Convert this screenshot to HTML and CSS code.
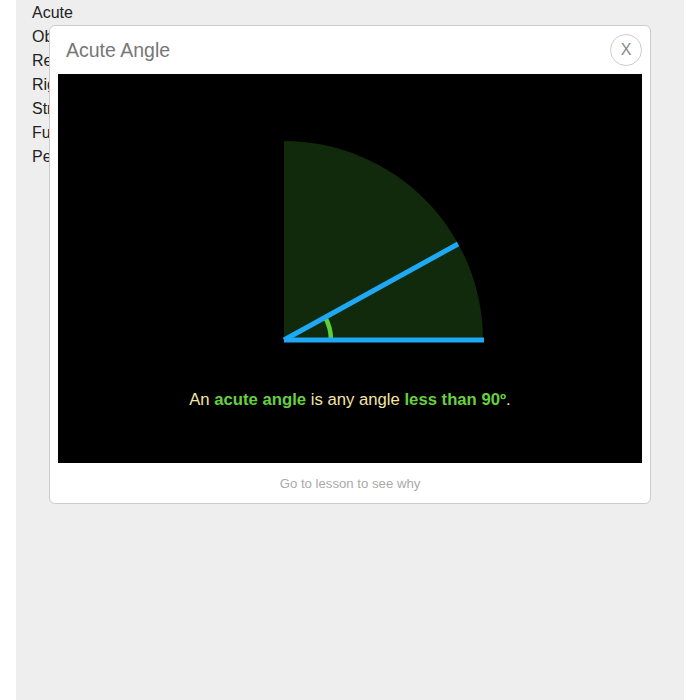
FILE: index.html
```html
<!DOCTYPE html>
<html>
<head>
<meta charset="utf-8">
<link rel="stylesheet" href="styles.css">
</head>
<body>
<div class="page">
  <ul class="list">
    <li>Acute</li>
    <li>Obtuse</li>
    <li>Reflex</li>
    <li>Right</li>
    <li>Straight</li>
    <li>Full</li>
    <li>Perpendicular</li>
  </ul>
  <div class="modal">
    <div class="modal-head">
      <h1 class="title">Acute Angle</h1>
      <button class="close">X</button>
    </div>
    <div class="stage">
      <svg class="diagram" width="584" height="389" viewBox="0 0 584 389">
        <path d="M226 266 L226 67 A199 199 0 0 1 425 266 Z" fill="#112a0c"/>
        <path d="M273 266 A47 47 0 0 0 266.7 242.5" fill="none" stroke="#5ccf3a" stroke-width="4.5"/>
        <line x1="226" y1="266" x2="400" y2="170" stroke="#1ea8f5" stroke-width="5"/>
        <line x1="226" y1="266" x2="426" y2="266" stroke="#1ea8f5" stroke-width="5"/>
      </svg>
      <p class="caption">An <b>acute angle</b> is any angle <b>less than 90º</b>.</p>
    </div>
    <div class="modal-foot">Go to lesson to see why</div>
  </div>
</div>
</body>
</html>
```
FILE: styles.css
```css
html, body {
  margin: 0;
  padding: 0;
  background: #fff;
  font-family: "Liberation Sans", Arial, sans-serif;
}
.page {
  position: relative;
  margin: 0 16px;
  background: #eeeeee;
  min-height: 700px;
}
.list {
  list-style: none;
  margin: 0;
  padding: 1px 0 0 16px;
  font-size: 16px;
  line-height: 24px;
  color: #222;
}
.modal {
  position: absolute;
  left: 33px;
  top: 25px;
  width: 600px;
  background: #fff;
  border: 1px solid #cccccc;
  border-radius: 6px;
}
.modal-head {
  height: 48px;
  display: flex;
  align-items: center;
  justify-content: space-between;
  padding: 0 8px 0 16px;
}
.title {
  margin: 0;
  font-size: 19.5px;
  font-weight: normal;
  color: #777;
}
.close {
  width: 32px;
  height: 32px;
  border-radius: 50%;
  border: 1px solid #cccccc;
  background: #fff;
  color: #888;
  font-family: "Liberation Sans", Arial, sans-serif;
  font-size: 16px;
  padding: 0;
}
.stage {
  position: relative;
  margin: 0 8px;
  width: 584px;
  height: 389px;
  background: #000;
}
.diagram {
  display: block;
}
.caption {
  position: absolute;
  left: 0;
  right: 0;
  top: 316px;
  margin: 0;
  text-align: center;
  font-size: 16.7px;
  color: #f3e6a6;
}
.caption b {
  color: #66d13f;
}
.modal-foot {
  height: 40px;
  display: flex;
  align-items: center;
  justify-content: center;
  font-size: 13.2px;
  color: #aaa;
}
```
